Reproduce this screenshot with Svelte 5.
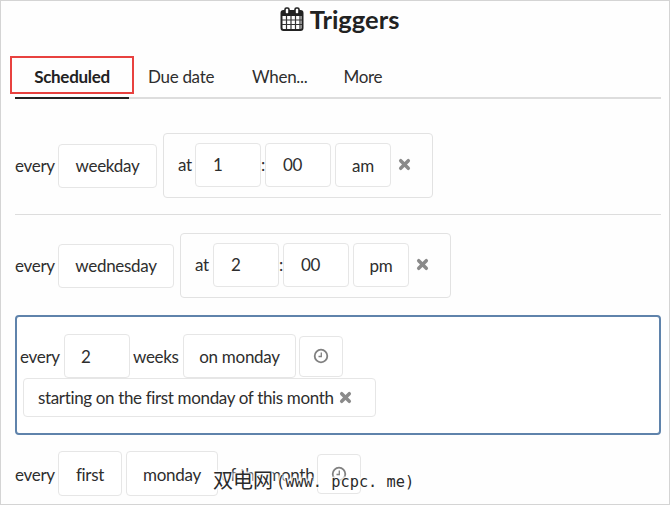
<script>
  const tabs = ['Due date', 'When...', 'More'];
</script>

<div class="page">
  <h1 class="title">
    <svg class="cal" viewBox="0 0 24 24" width="24" height="24" aria-hidden="true">
      <rect x="1.5" y="4" width="21" height="19" rx="2" fill="none" stroke="#222" stroke-width="2"/>
      <rect x="1.5" y="4" width="21" height="5" fill="#222"/>
      <rect x="5" y="1" width="4" height="6" rx="1.5" fill="#fff" stroke="#222" stroke-width="1.6"/>
      <rect x="15" y="1" width="4" height="6" rx="1.5" fill="#fff" stroke="#222" stroke-width="1.6"/>
      <path d="M2 13h20M2 17.500h20M6.500 9v13M11 9v13M15.500 9v13M20 9v13" fill="none" stroke="#333" stroke-width="1.200"/>
    </svg>
    Triggers
  </h1>

  <div class="tabs">
    <div class="tab active">Scheduled</div>
    {#each tabs as t}
      <div class="tab">{t}</div>
    {/each}
  </div>

  <div class="row first">
    <span>every</span>
    <div class="chip w99">weekday</div>
    <div class="group">
      <span class="at">at</span>
      <div class="chip num">1</div>
      <span class="colon">:</span>
      <div class="chip num">00</div>
      <div class="chip ampm am">am</div>
      <svg class="x" viewBox="0 0 12 12" width="13" height="13"><path d="M2.500 2.500l7 7M9.500 2.500l-7 7" stroke="#8a8a8a" stroke-width="3.200" stroke-linecap="round"/></svg>
    </div>
  </div>

  <div class="row second">
    <span>every</span>
    <div class="chip w116">wednesday</div>
    <div class="group">
      <span class="at">at</span>
      <div class="chip num">2</div>
      <span class="colon">:</span>
      <div class="chip num">00</div>
      <div class="chip ampm pm">pm</div>
      <svg class="x" viewBox="0 0 12 12" width="13" height="13"><path d="M2.500 2.500l7 7M9.500 2.500l-7 7" stroke="#8a8a8a" stroke-width="3.200" stroke-linecap="round"/></svg>
    </div>
  </div>

  <div class="selected">
    <div class="line">
      <span>every</span>
      <div class="chip num n2">2</div>
      <span class="weeks">weeks</span>
      <div class="chip onmon">on monday</div>
      <div class="chip clock">
        <svg viewBox="0 0 16 16" width="16" height="16"><circle cx="8" cy="8" r="6.300" fill="none" stroke="#808080" stroke-width="1.800"/><path d="M8.300 4.500v4H5.500" fill="none" stroke="#808080" stroke-width="1.300"/></svg>
      </div>
    </div>
    <div class="chip starting">
      starting on the first monday of this month
      <svg class="x" viewBox="0 0 12 12" width="13" height="13"><path d="M2.500 2.500l7 7M9.500 2.500l-7 7" stroke="#8a8a8a" stroke-width="3.200" stroke-linecap="round"/></svg>
    </div>
  </div>

  <div class="row last">
    <span>every</span>
    <div class="chip f">first</div>
    <div class="chip m">monday</div>
    <span class="ofm">of the month</span>
    <div class="chip clock">
      <svg viewBox="0 0 16 16" width="16" height="16"><circle cx="8" cy="8" r="6.300" fill="none" stroke="#808080" stroke-width="1.800"/><path d="M8.300 4.500v4H5.500" fill="none" stroke="#808080" stroke-width="1.300"/></svg>
    </div>
  </div>

  <div class="redbox"></div>
  <div class="mark"><span class="cjk">双电网</span>(www. pcpc. me)</div>
</div>

<style>
  :global(body) { margin: 0; background: #fff; }
  .page {
    position: relative;
    box-sizing: border-box;
    width: 670px;
    height: 505px;
    overflow: hidden;
    border: 1px solid #d4d4d4;
    padding: 0 8px 0 14px;
    background: #fefefe;
    font-family: Lato, sans-serif;
    font-size: 17px;
    letter-spacing: -0.3px;
    color: #2e2e2e;
  }
  .title {
    margin: 0;
    height: 48px;
    display: flex;
    align-items: center;
    justify-content: center;
    gap: 6px;
    font-size: 25.500px;
    font-weight: 700;
    letter-spacing: 0;
    color: #222;
    padding: 0 0 12px 3px;
    box-sizing: border-box;
  }
  .tabs {
    display: flex;
    height: 50px;
    border-bottom: 2px solid #ddd;
    box-sizing: border-box;
  }
  .tab {
    padding: 0 19px;
    line-height: 56px;
    height: 50px;
    box-sizing: border-box;
  }
  .tab:last-child { padding-left: 17px; }
  .tab.active {
    font-weight: 700;
    color: #222;
    width: 114px;
    text-align: center;
    padding: 0;
    border-bottom: 2px solid #222;
  }
  .row { display: flex; align-items: center; }
  .first { margin-top: 34px; padding-bottom: 16px; border-bottom: 1px solid #ddd; }
  .second { margin-top: 18px; }
  .chip {
    box-sizing: border-box;
    height: 44px;
    display: flex;
    align-items: center;
    border: 1px solid #e6e6e6;
    border-radius: 4px;
    background: #fff;
    flex: none;
  }
  .row > span:first-child { width: 43px; }
  .w99 { width: 99px; justify-content: center; }
  .w116 { width: 116px; justify-content: center; }
  .group {
    display: flex;
    align-items: center;
    box-sizing: border-box;
    height: 65px;
    padding: 0 0 2px 14px;
    margin-left: 6px;
    border: 1px solid #e2e2e2;
    border-radius: 4px;
    width: 270px;
  }
  .second .group { width: 271px; }
  .at { width: 17px; }
  .second .at { width: 18px; }
  .num { width: 66px; padding-left: 17px; }
  .colon { width: 4px; text-align: center; }
  .ampm { width: 56px; margin-left: 4px; justify-content: center; padding-top: 2px; }
  .x { margin-left: 7px; flex: none; }
  .selected {
    box-sizing: border-box;
    height: 120px;
    margin-top: 17px;
    border: 2px solid #5f83ab;
    border-radius: 4px;
    padding: 17px 0 0 3px;
    background: #fff;
  }
  .line { display: flex; align-items: center; }
  .line > span:first-child { width: 43px; }
  .n2 { margin-left: 1px; width: 66px; padding-left: 16px; }
  .weeks { margin: 0 3px 0 3px; width: 47px; }
  .onmon { width: 113px; justify-content: center; }
  .clock { width: 44px; height: 41px; justify-content: center; margin-left: 3px; }
  .starting {
    margin: 0 0 0 3px;
    width: 353px;
    height: 39px;
    padding-left: 14px;
    letter-spacing: -0.35px;
  }
  .starting .x { margin-left: 5px; }
  .last { margin-top: 16px; }
  .last > span { position: relative; top: 1px; }
  .last > .chip { height: 45px; }
  .last > .f, .last > .m { padding-top: 2px; }
  .last > .clock { height: 40px; }
  .f { width: 64px; justify-content: center; }
  .m { width: 92px; justify-content: center; margin-left: 4px; }
  .ofm { margin-left: 3px; width: 93px; white-space: nowrap; }
  .redbox {
    position: absolute;
    left: 9px;
    top: 55px;
    width: 124px;
    height: 38px;
    box-sizing: border-box;
    border: 2px solid #e8413f;
  }
  .mark {
    position: absolute;
    left: 212px;
    top: 464px;
    font-family: "DejaVu Sans Mono", "Noto Sans CJK SC", monospace;
    font-size: 15.300px;
    letter-spacing: 0;
    color: #2a2a2a;
    white-space: nowrap;
    text-shadow: 0 0 2px #fff, 0 0 2px #fff, 0 0 3px #fff, 1px 1px 2px #fff, -1px -1px 2px #fff, 0 0 4px #fff;
  }
  .cjk { font-family: "Noto Sans CJK SC", sans-serif; font-size: 20px; margin-right: 3px; vertical-align: -1px; }
</style>
